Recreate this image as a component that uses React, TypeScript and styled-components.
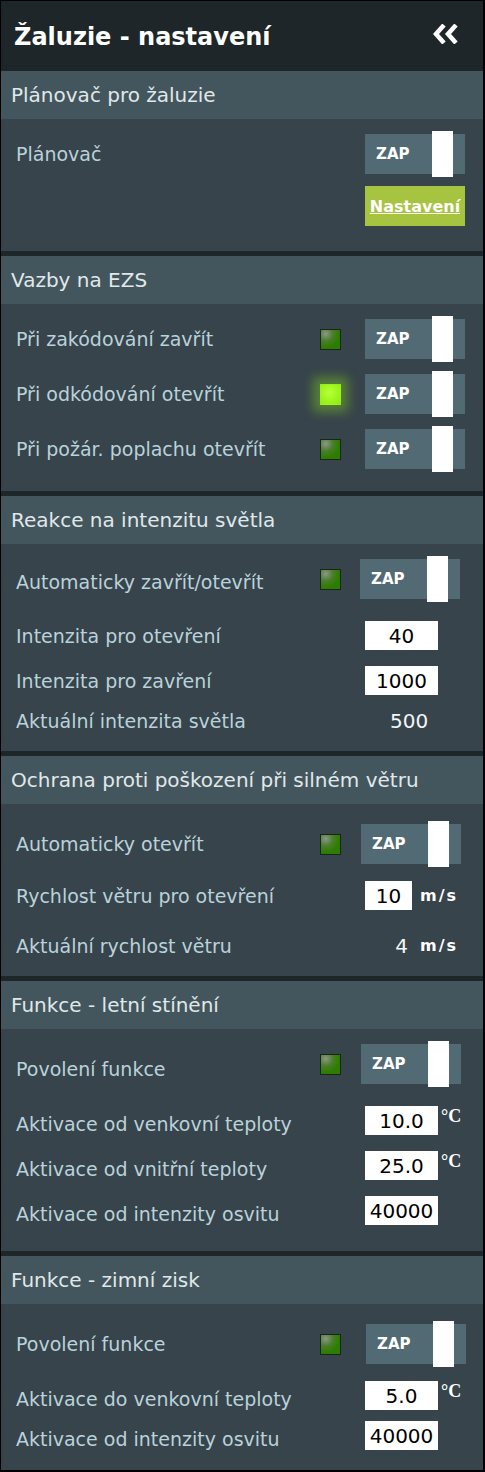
import React from 'react';
import styled, { createGlobalStyle } from 'styled-components';

const GlobalStyle = createGlobalStyle`
  html, body {
    margin: 0;
    padding: 0;
    background: #000;
  }

  body {
    font-family: 'DejaVu Sans', Verdana, sans-serif;
  }
`;

const Panel = styled.div`
  width: 485px;
  box-sizing: border-box;
  border-top: 1px solid #000;
  border-left: 1px solid #000;
  border-right: 2px solid #000;
  border-bottom: 2px solid #000;
  background: #1f2629;
`;

const TopBar = styled.header`
  height: 70px;
  display: flex;
  align-items: center;
  justify-content: space-between;
  padding: 2px 24px 0 13px;
  box-sizing: border-box;
  color: #fff;

  h1 {
    margin: 0;
    font-size: 24px;
    font-weight: bold;
  }

  svg {
    margin-bottom: 6px;
  }
`;

const SectionHead = styled.div`
  height: 48px;
  display: flex;
  align-items: center;
  padding-left: 10px;
  background: #43565d;
  color: #e0e8ea;
  font-size: 20px;
`;

const Body = styled.div<{ $pt: number; $pb: number; $last?: boolean }>`
  background: #37444b;
  padding: ${(p) => p.$pt}px 0 ${(p) => p.$pb}px 15px;
  border-bottom: ${(p) => (p.$last ? '0' : '5px solid #1f2629')};
`;

const Row = styled.div<{ $h: number; $mt?: number }>`
  display: flex;
  align-items: center;
  height: ${(p) => p.$h}px;
  margin-top: ${(p) => p.$mt || 0}px;
`;

const Label = styled.div<{ $drop?: number }>`
  flex: 1;
  font-size: 19px;
  color: #bad2da;
  white-space: nowrap;
  padding-top: ${(p) => p.$drop || 0}px;
`;

const Led = styled.div<{ $on?: boolean }>`
  width: 19px;
  height: 19px;
  margin-right: 24px;
  border: 1px solid ${(p) => (p.$on ? 'transparent' : '#1b241b')};
  background: ${(p) =>
    p.$on
      ? 'radial-gradient(circle at 45% 40%, #b8ff3a 0, #9cf51a 60%, #8fe812 100%)'
      : 'radial-gradient(circle at 25% 20%, #8a9888 0, #4a7e2a 35%, #2d7e00 65%)'};
  box-shadow: ${(p) =>
    p.$on ? '0 0 10px 7px rgba(150, 240, 20, 0.35)' : 'none'};
`;

const Control = styled.div`
  width: 118px;
  display: flex;
  align-items: center;
`;

const Toggle = styled.div<{ $nudge?: number }>`
  width: 100px;
  height: 40px;
  box-sizing: border-box;
  margin-left: ${(p) => p.$nudge || 0}px;
  padding-left: 11px;
  display: flex;
  align-items: center;
  background: #526a73;

  span {
    margin-right: auto;
    color: #fff;
    font-size: 15px;
    font-weight: bold;
  }
`;

const Knob = styled.div`
  width: 21px;
  height: 46px;
  margin-right: 12px;
  flex-shrink: 0;
  background: #fff;
`;

const SettingsButton = styled.a`
  width: 100px;
  height: 40px;
  display: flex;
  align-items: center;
  justify-content: center;
  background: #a6c43f;
  color: #fff;
  font-size: 16px;
  font-weight: bold;
  text-decoration: underline;
  cursor: pointer;
`;

const Field = styled.input<{ $w?: number }>`
  width: ${(p) => p.$w || 73}px;
  height: 29px;
  box-sizing: border-box;
  padding: 0;
  border: none;
  outline: none;
  background: #fff;
  color: #000;
  font-family: inherit;
  font-size: 20px;
  text-align: center;
`;

const Value = styled.div<{ $w: number; $align: 'left' | 'right'; $pad: number }>`
  width: ${(p) => p.$w}px;
  box-sizing: border-box;
  text-align: ${(p) => p.$align};
  padding-${(p) => p.$align}: ${(p) => p.$pad}px;
  color: #f2f6f7;
  font-size: 20px;
`;

const Unit = styled.span`
  margin-left: 8px;
  color: #fff;
  font-size: 16px;
  font-weight: bold;
  letter-spacing: 2px;
`;

const Degree = styled.span`
  align-self: flex-start;
  margin: 0 0 0 3px;
  color: #fff;
  font-family: 'Liberation Serif', 'Times New Roman', serif;
  font-size: 18px;
  font-weight: bold;
`;

const Collapse = () => (
  <svg width="26" height="20" viewBox="0 0 26 20">
    <polyline
      points="11,1 3,10 11,19"
      fill="none"
      stroke="#fff"
      strokeWidth="4.5"
      strokeLinejoin="miter"
    />
    <polyline
      points="23,1 15,10 23,19"
      fill="none"
      stroke="#fff"
      strokeWidth="4.5"
      strokeLinejoin="miter"
    />
  </svg>
);

const Switch = ({ nudge }: { nudge?: number }) => (
  <Toggle $nudge={nudge}>
    <span>ZAP</span>
    <Knob />
  </Toggle>
);

const App = () => {
  return (
    <>
      <GlobalStyle />
      <Panel>
        <TopBar>
          <h1>Žaluzie - nastavení</h1>
          <Collapse />
        </TopBar>

        <SectionHead>Plánovač pro žaluzie</SectionHead>
        <Body $pt={15} $pb={25}>
          <Row $h={40}>
            <Label>Plánovač</Label>
            <Control>
              <Switch />
            </Control>
          </Row>
          <Row $h={40} $mt={12}>
            <Label />
            <Control>
              <SettingsButton>Nastavení</SettingsButton>
            </Control>
          </Row>
        </Body>

        <SectionHead>Vazby na EZS</SectionHead>
        <Body $pt={15} $pb={22}>
          <Row $h={40}>
            <Label>Při zakódování zavřít</Label>
            <Led />
            <Control>
              <Switch />
            </Control>
          </Row>
          <Row $h={40} $mt={15}>
            <Label>Při odkódování otevřít</Label>
            <Led $on />
            <Control>
              <Switch />
            </Control>
          </Row>
          <Row $h={40} $mt={15}>
            <Label>Při požár. poplachu otevřít</Label>
            <Led />
            <Control>
              <Switch />
            </Control>
          </Row>
        </Body>

        <SectionHead>Reakce na intenzitu světla</SectionHead>
        <Body $pt={15} $pb={16}>
          <Row $h={40}>
            <Label $drop={6}>Automaticky zavřít/otevřít</Label>
            <Led />
            <Control>
              <Switch nudge={-5} />
            </Control>
          </Row>
          <Row $h={29} $mt={22}>
            <Label>Intenzita pro otevření</Label>
            <Control>
              <Field readOnly value="40" />
            </Control>
          </Row>
          <Row $h={29} $mt={16}>
            <Label>Intenzita pro zavření</Label>
            <Control>
              <Field readOnly value="1000" />
            </Control>
          </Row>
          <Row $h={29} $mt={11}>
            <Label>Aktuální intenzita světla</Label>
            <Control>
              <Value $w={73} $align="left" $pad={25}>
                500
              </Value>
            </Control>
          </Row>
        </Body>

        <SectionHead>Ochrana proti poškození při silném větru</SectionHead>
        <Body $pt={20} $pb={16}>
          <Row $h={40}>
            <Label>Automaticky otevřít</Label>
            <Led />
            <Control>
              <Switch nudge={-4} />
            </Control>
          </Row>
          <Row $h={29} $mt={17}>
            <Label>Rychlost větru pro otevření</Label>
            <Control>
              <Field readOnly value="10" $w={47} />
              <Unit>m/s</Unit>
            </Control>
          </Row>
          <Row $h={29} $mt={21}>
            <Label>Aktuální rychlost větru</Label>
            <Control>
              <Value $w={47} $align="right" $pad={4}>
                4
              </Value>
              <Unit>m/s</Unit>
            </Control>
          </Row>
        </Body>

        <SectionHead>Funkce - letní stínění</SectionHead>
        <Body $pt={15} $pb={26}>
          <Row $h={40}>
            <Label $drop={9}>Povolení funkce</Label>
            <Led />
            <Control>
              <Switch nudge={-4} />
            </Control>
          </Row>
          <Row $h={29} $mt={22}>
            <Label $drop={7}>Aktivace od venkovní teploty</Label>
            <Control>
              <Field readOnly value="10.0" />
              <Degree>°C</Degree>
            </Control>
          </Row>
          <Row $h={29} $mt={16}>
            <Label $drop={6}>Aktivace od vnitřní teploty</Label>
            <Control>
              <Field readOnly value="25.0" />
              <Degree>°C</Degree>
            </Control>
          </Row>
          <Row $h={29} $mt={16}>
            <Label $drop={6}>Aktivace od intenzity osvitu</Label>
            <Control>
              <Field readOnly value="40000" />
            </Control>
          </Row>
        </Body>

        <SectionHead>Funkce - zimní zisk</SectionHead>
        <Body $pt={20} $pb={20} $last>
          <Row $h={40}>
            <Label>Povolení funkce</Label>
            <Led />
            <Control>
              <Switch nudge={1} />
            </Control>
          </Row>
          <Row $h={29} $mt={17}>
            <Label $drop={7}>Aktivace do venkovní teploty</Label>
            <Control>
              <Field readOnly value="5.0" />
              <Degree>°C</Degree>
            </Control>
          </Row>
          <Row $h={29} $mt={11}>
            <Label $drop={6}>Aktivace od intenzity osvitu</Label>
            <Control>
              <Field readOnly value="40000" />
            </Control>
          </Row>
        </Body>
      </Panel>
    </>
  );
};

export default App;
